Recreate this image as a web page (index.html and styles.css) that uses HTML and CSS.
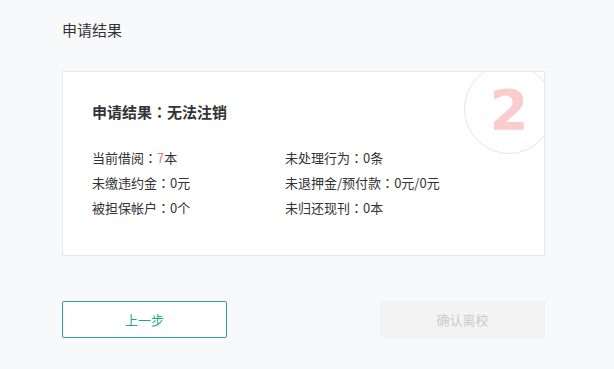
FILE: index.html
```html
<!DOCTYPE html>
<html lang="zh-CN">
<head>
    <meta charset="UTF-8">
    <title>申请结果</title>
    <link rel="stylesheet" href="styles.css">
</head>
<body>
    <div class="page">
        <h3 class="page-title">申请结果</h3>

        <div class="result-card">
            <div class="step-badge">2</div>
            <h4 class="result-title">申请结果<span class="colon">：</span>无法注销</h4>
            <div class="result-grid">
                <div class="item">当前借阅<span class="colon">：</span><span class="red">7</span>本</div>
                <div class="item">未处理行为<span class="colon">：</span>0条</div>
                <div class="item">未缴违约金<span class="colon">：</span>0元</div>
                <div class="item">未退押金/预付款<span class="colon">：</span>0元/0元</div>
                <div class="item">被担保帐户<span class="colon">：</span>0个</div>
                <div class="item">未归还现刊<span class="colon">：</span>0本</div>
            </div>
        </div>

        <div class="actions">
            <button class="btn btn-prev">上一步</button>
            <button class="btn btn-confirm" disabled>确认离校</button>
        </div>
    </div>
</body>
</html>
```

FILE: styles.css
```css
body {
    margin: 0;
    background: #f8f9fb;
    font-family: "Noto Sans CJK SC", "Noto Sans", sans-serif;
    color: #333;
}
.page {
    width: 483px;
    padding: 18px 0 0 62px;
}
.page-title {
    margin: 0;
    font-size: 15px;
    font-weight: normal;
    line-height: 24px;
}
.result-card {
    position: relative;
    overflow: hidden;
    margin-top: 29px;
    height: 183px;
    background: #fff;
    border: 1px solid #e6e8eb;
    padding: 0 29px;
}
.step-badge {
    position: absolute;
    top: -8px;
    right: -10px;
    width: 88px;
    height: 88px;
    border: 1px solid #fadcdc;
    border-radius: 50%;
    color: #fbcccc;
    font-size: 56px;
    font-weight: bold;
    line-height: 90px;
    text-align: center;
    font-family: "DejaVu Sans", sans-serif;
}
.result-title {
    margin: 28px 0 0;
    font-size: 15px;
    font-weight: bold;
    line-height: 24px;
}
.colon {
    font-family: "Noto Sans CJK JP", sans-serif;
    font-feature-settings: "locl" 0;
}
.result-grid {
    display: grid;
    grid-template-columns: 193px 1fr;
    row-gap: 6px;
    margin-top: 24px;
    font-size: 13px;
    line-height: 19px;
}
.red {
    color: #f37575;
}
.actions {
    display: flex;
    justify-content: space-between;
    margin-top: 45px;
}
.btn {
    width: 165px;
    height: 37px;
    font-family: inherit;
    font-size: 13px;
    border-radius: 2px;
    cursor: pointer;
}
.btn-prev {
    background: #fff;
    border: 1px solid #2ea68b;
    color: #1fa88c;
}
.btn-confirm {
    background: #f3f3f3;
    border: 1px solid #f3f3f3;
    color: #cbcbcb;
    cursor: default;
}
```
